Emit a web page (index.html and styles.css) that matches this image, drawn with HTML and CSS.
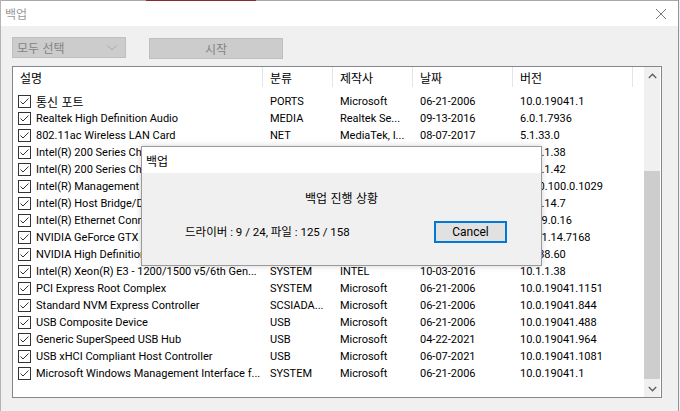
FILE: index.html
```html
<!DOCTYPE html>
<html lang="ko">
<head>
<meta charset="utf-8">
<link rel="stylesheet" href="styles.css">
</head>
<body>
<div class="window">
  <div class="topline"><span class="tl-a"></span><span class="tl-red"></span><span class="tl-b"></span></div>
  <div class="titlebar">
    <span class="title ko">백업</span>
    <svg class="close" width="12" height="12" viewBox="0 0 12 12"><path d="M1 1L11 11M11 1L1 11" stroke="#7a7a7a" stroke-width="1" fill="none"/></svg>
  </div>
  <div class="content">
    <div class="toolbar">
      <div class="combo ko"><span>모두 선택</span><svg width="10" height="6" viewBox="0 0 10 6"><path d="M0.5 0.5L5 5L9.5 0.5" stroke="#a8a8a8" fill="none"/></svg></div>
      <div class="btn-disabled ko">시작</div>
    </div>
    <div class="list">
      <div class="list-main">
        <div class="row header ko">
          <div class="c name hcell">설명</div>
          <div class="c type hcell">분류</div>
          <div class="c maker hcell">제작사</div>
          <div class="c date hcell">날짜</div>
          <div class="c ver hcell">버전</div>
          <div class="c fill"></div>
        </div>
        <div class="rows">
          <div class="row"><div class="c name"><i class="cb"></i><span class="ko">통신 포트</span></div><div class="c type">PORTS</div><div class="c maker">Microsoft</div><div class="c date">06-21-2006</div><div class="c ver">10.0.19041.1</div></div>
          <div class="row"><div class="c name"><i class="cb"></i>Realtek High Definition Audio</div><div class="c type">MEDIA</div><div class="c maker">Realtek Se...</div><div class="c date">09-13-2016</div><div class="c ver">6.0.1.7936</div></div>
          <div class="row"><div class="c name"><i class="cb"></i>802.11ac Wireless LAN Card</div><div class="c type">NET</div><div class="c maker">MediaTek, I...</div><div class="c date">08-07-2017</div><div class="c ver">5.1.33.0</div></div>
          <div class="row"><div class="c name"><i class="cb"></i>Intel(R) 200 Series Chipset Family...</div><div class="c type">SYSTEM</div><div class="c maker">INTEL</div><div class="c date">07-18-1968</div><div class="c ver">10.1.1.38</div></div>
          <div class="row"><div class="c name"><i class="cb"></i>Intel(R) 200 Series Chipset Family...</div><div class="c type">SYSTEM</div><div class="c maker">INTEL</div><div class="c date">07-18-1968</div><div class="c ver">10.1.1.42</div></div>
          <div class="row"><div class="c name"><i class="cb"></i>Intel(R) Management Engine Interf...</div><div class="c type">SYSTEM</div><div class="c maker">Intel</div><div class="c date">11-04-2020</div><div class="c ver">2040.100.0.1029</div></div>
          <div class="row"><div class="c name"><i class="cb"></i>Intel(R) Host Bridge/DRAM Registers...</div><div class="c type">SYSTEM</div><div class="c maker">INTEL</div><div class="c date">10-03-2016</div><div class="c ver">10.1.14.7</div></div>
          <div class="row"><div class="c name"><i class="cb"></i>Intel(R) Ethernet Connection (2) I219...</div><div class="c type">NET</div><div class="c maker">Intel</div><div class="c date">07-01-2020</div><div class="c ver">12.19.0.16</div></div>
          <div class="row"><div class="c name"><i class="cb"></i>NVIDIA GeForce GTX 1050 Ti</div><div class="c type">DISPLAY</div><div class="c maker">NVIDIA</div><div class="c date">03-20-2021</div><div class="c ver">27.21.14.7168</div></div>
          <div class="row"><div class="c name"><i class="cb"></i>NVIDIA High Definition Audio</div><div class="c type">MEDIA</div><div class="c maker">NVIDIA Co...</div><div class="c date">02-22-2021</div><div class="c ver">1.3.38.60</div></div>
          <div class="row"><div class="c name"><i class="cb"></i>Intel(R) Xeon(R) E3 - 1200/1500 v5/6th Gen...</div><div class="c type">SYSTEM</div><div class="c maker">INTEL</div><div class="c date">10-03-2016</div><div class="c ver">10.1.1.38</div></div>
          <div class="row"><div class="c name"><i class="cb"></i>PCI Express Root Complex</div><div class="c type">SYSTEM</div><div class="c maker">Microsoft</div><div class="c date">06-21-2006</div><div class="c ver">10.0.19041.1151</div></div>
          <div class="row"><div class="c name"><i class="cb"></i>Standard NVM Express Controller</div><div class="c type">SCSIADA...</div><div class="c maker">Microsoft</div><div class="c date">06-21-2006</div><div class="c ver">10.0.19041.844</div></div>
          <div class="row"><div class="c name"><i class="cb"></i>USB Composite Device</div><div class="c type">USB</div><div class="c maker">Microsoft</div><div class="c date">06-21-2006</div><div class="c ver">10.0.19041.488</div></div>
          <div class="row"><div class="c name"><i class="cb"></i>Generic SuperSpeed USB Hub</div><div class="c type">USB</div><div class="c maker">Microsoft</div><div class="c date">04-22-2021</div><div class="c ver">10.0.19041.964</div></div>
          <div class="row"><div class="c name"><i class="cb"></i>USB xHCI Compliant Host Controller</div><div class="c type">USB</div><div class="c maker">Microsoft</div><div class="c date">06-07-2021</div><div class="c ver">10.0.19041.1081</div></div>
          <div class="row"><div class="c name"><i class="cb"></i>Microsoft Windows Management Interface f...</div><div class="c type">SYSTEM</div><div class="c maker">Microsoft</div><div class="c date">06-21-2006</div><div class="c ver">10.0.19041.1</div></div>
        </div>
      </div>
      <div class="vscroll">
        <div class="arrow"><svg width="9" height="6" viewBox="0 0 9 6"><path d="M0.8 5L4.5 1.3L8.2 5" stroke="#606060" stroke-width="1.4" fill="none"/></svg></div>
        <div class="track"><div class="thumb"></div></div>
        <div class="arrow"><svg width="9" height="6" viewBox="0 0 9 6"><path d="M0.8 1L4.5 4.7L8.2 1" stroke="#606060" stroke-width="1.4" fill="none"/></svg></div>
      </div>
    </div>
  </div>

  <div class="dialog">
    <div class="dlg-title ko">백업</div>
    <div class="dlg-body">
      <div class="dlg-heading ko">백업 진행 상황</div>
      <div class="dlg-row">
        <span class="dlg-status">드라이버 : 9 / 24, 파일 : 125 / 158</span>
        <button class="cancel">Cancel</button>
      </div>
    </div>
  </div>
</div>
</body>
</html>
```
FILE: styles.css
```css
* { box-sizing: border-box; }
html, body { margin: 0; padding: 0; }
body {
  width: 680px;
  height: 411px;
  overflow: hidden;
  background: #f0f0f0;
  font-family: Roboto, "Noto Sans CJK KR", sans-serif;
  font-size: 11px;
  color: #000;
}
.ko { font-family: "Noto Sans CJK KR", sans-serif; font-size: 12px; }
.window {
  position: relative;
  width: 679px;
  height: 411px;
  border-left: 1px solid #b4b4b4;
  border-right: 1px solid #8d95a3;
  background: #f0f0f0;
}
.topline { display: flex; height: 1px; }
.tl-a { width: 145px; background: #a9a9a9; }
.tl-red { width: 110px; background: #8a2a2a; }
.tl-b { flex: 1; background: #a9a9a9; }
.titlebar {
  height: 25px;
  background: #fff;
  display: flex;
  align-items: center;
  justify-content: space-between;
  padding: 0 11px 0 4px;
}
.title { color: #9a9a9a; }
.close { display: block; }
.content { padding: 11px 0 0 11px; }
.toolbar { display: flex; gap: 23px; height: 21px; }
.combo {
  width: 114px;
  height: 21px;
  background: #cccccc;
  border: 1px solid #bfbfbf;
  display: flex;
  align-items: center;
  justify-content: space-between;
  padding: 0 8px 0 4px;
  color: #838383;
}
.btn-disabled {
  width: 134px;
  height: 21px;
  margin-top: 1px;
  background: #cccccc;
  border: 1px solid #bfbfbf;
  display: flex;
  align-items: center;
  justify-content: center;
  color: #838383;
}
.list {
  margin-top: 8px;
  width: 650px;
  height: 332px;
  border: 1px solid #828790;
  background: #fff;
  display: flex;
}
.list-main { flex: 1; }
.row { display: flex; height: 17px; align-items: center; white-space: nowrap; }
.c { overflow: hidden; padding-left: 7px; }
.name { width: 250px; display: flex; align-items: center; padding-left: 5px; }
.type { width: 70px; }
.maker { width: 80px; }
.date { width: 100px; }
.ver { width: 120px; }
.fill { flex: 1; }
.header { height: 20px; align-items: stretch; }
.hcell {
  display: flex;
  align-items: center;
  border-right: 1px solid #e5e5e5;
  padding-left: 7px;
}
.header .name { padding-left: 7px; }
.rows { padding-top: 6px; }
.cb {
  display: inline-block;
  width: 13px;
  height: 13px;
  border: 1px solid #333;
  margin-right: 5px;
  flex: none;
  background: #fff url("data:image/svg+xml;utf8,<svg xmlns='http://www.w3.org/2000/svg' width='11' height='11' viewBox='0 0 11 11'><path d='M1.5 5.5L4 8L9.5 2.5' stroke='%23333' stroke-width='1' fill='none'/></svg>") no-repeat center;
}
.vscroll {
  width: 17px;
  display: flex;
  flex-direction: column;
  background: #f0f0f0;
  border-right: 1px solid #fff;
}
.arrow { height: 17px; display: flex; align-items: center; justify-content: center; }
.track { flex: 1; padding-top: 87px; }
.thumb { height: 208px; background: #cdcdcd; }
.dialog {
  position: absolute;
  left: 140px;
  top: 146px;
  width: 401px;
  height: 120px;
  border: 1px solid #9a9a9a;
  box-shadow: 0 0 6px rgba(0,0,0,0.18);
  background: #f0f0f0;
  display: flex;
  flex-direction: column;
}
.dlg-title {
  height: 26px;
  background: #fff;
  display: flex;
  align-items: center;
  padding-left: 4px;
}
.dlg-body { flex: 1; display: flex; flex-direction: column; }
.dlg-heading { text-align: center; margin-top: 16px; line-height: 18px; }
.dlg-row {
  display: flex;
  align-items: center;
  justify-content: space-between;
  margin-top: 14px;
  padding: 0 34px 0 43px;
}
.dlg-status { font-size: 11.5px; line-height: 16px; }
.cancel {
  width: 73px;
  height: 22px;
  background: #e1e1e1;
  border: 2px solid #0078d7;
  font-family: Roboto, "Noto Sans", sans-serif;
  font-size: 12px;
  padding: 0;
  color: #000;
}
```
